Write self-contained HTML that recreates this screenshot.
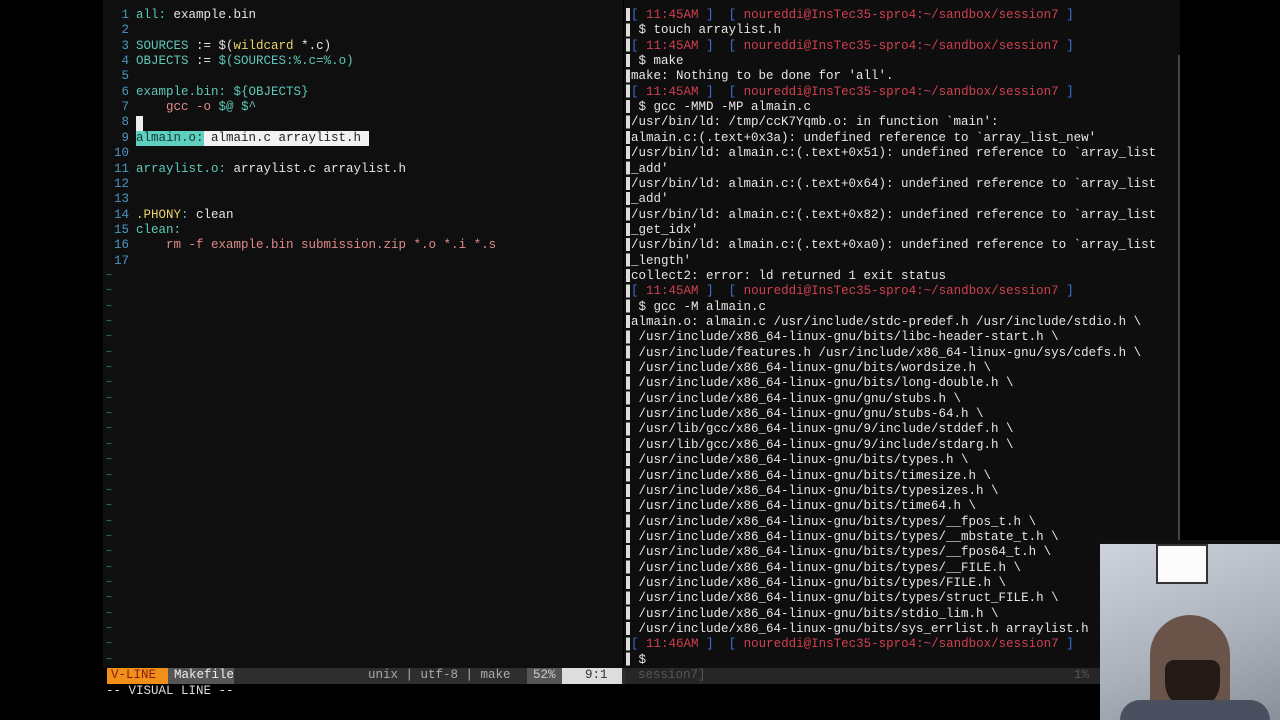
<!DOCTYPE html><html><head><style>
body{margin:0;width:1280px;height:720px;background:#000;overflow:hidden;position:relative;font-family:"Liberation Mono",monospace;font-size:12.5px;}
.l{position:absolute;white-space:pre;line-height:15.35px;height:15.35px;}
#vim{position:absolute;left:103px;top:0;width:520px;height:668px;background:#0f0f0f;}
#term{position:absolute;left:624px;top:0;width:556px;height:668px;background:#0e0e0e;}
.n{color:#4a96c0;}.t{color:#5ec8b8}.w{color:#e6e6e6}.y{color:#e8d36a}.p{color:#e08a8a}
.b{color:#3d6fd6}.r{color:#d04050}.g{color:#888}
</style></head><body>
<div id="vim"></div><div id="term"></div>
<div style="position:absolute;left:136px;top:116px;width:7px;height:15px;background:#eee"></div>
<div style="position:absolute;left:136px;top:131px;width:68px;height:15px;background:#5fd0c0"></div>
<div style="position:absolute;left:204px;top:131px;width:165px;height:15px;background:#f2f2f2"></div>
<div id="code"></div>
<div style="position:absolute;left:626px;top:8px;width:4px;height:660px;background:repeating-linear-gradient(#ddd 0 13px,#0e0e0e 13px 15.35px)"></div>
<div style="position:absolute;left:1178px;top:55px;width:2px;height:485px;background:#444"></div>
<div style="position:absolute;left:107px;top:668px;width:518px;height:16px;background:#2e2e2e"></div>
<div style="position:absolute;left:625px;top:668px;width:475px;height:16px;background:#262626"></div>
<div style="position:absolute;left:107px;top:668px;width:61px;height:16px;background:#f0901a"></div>
<div style="position:absolute;left:168px;top:668px;width:66px;height:16px;background:#555"></div>
<div style="position:absolute;left:527px;top:668px;width:35px;height:16px;background:#555"></div>
<div style="position:absolute;left:562px;top:668px;width:60px;height:16px;background:#ddd"></div>
<div class="l" style="left:111px;top:668px;color:#8a1a10">V-LINE</div>
<div class="l" style="left:174px;top:668px;color:#eee">Makefile</div>
<div class="l" style="left:368px;top:668px;color:#aaa">unix | utf-8 | make</div>
<div class="l" style="left:533px;top:668px;color:#ccc">52%</div>
<div class="l" style="left:585px;top:668px;color:#333">9:1</div>
<div class="l" style="left:638px;top:668px;color:#555">session7]</div>
<div class="l" style="left:1074px;top:668px;color:#555">1%</div>
<div class="l" style="left:106px;top:684px;color:#ddd">-- VISUAL LINE --</div>
<div style="position:absolute;left:1100px;top:540px;width:180px;height:180px;background:linear-gradient(160deg,#cfd4dc,#aab0ba 60%,#8a909a)">
<div style="position:absolute;left:0;top:0;width:180px;height:4px;background:#111"></div>
<div style="position:absolute;left:56px;top:4px;width:48px;height:36px;background:#fbfbfb;border:2px solid #333"></div>
<div style="position:absolute;left:50px;top:75px;width:80px;height:105px;border-radius:40px 40px 10px 10px;background:#6a5348"></div>
<div style="position:absolute;left:65px;top:120px;width:55px;height:50px;border-radius:10px 10px 30px 30px;background:#231a16"></div>
<div style="position:absolute;left:20px;top:160px;width:150px;height:20px;background:#4a5060;border-radius:20px 20px 0 0"></div>
</div>
<script>
const V=[
['<span class="t">all:</span> <span class="w">example.bin</span>'],[''],
['<span class="t">SOURCES</span> <span class="w">:= $(</span><span class="y">wildcard</span><span class="w"> *.c)</span>'],
['<span class="t">OBJECTS</span> <span class="w">:= </span><span class="t">$(SOURCES:%.c=%.o)</span>'],[''],
['<span class="t">example.bin:</span> <span class="t">${OBJECTS}</span>'],
['    <span class="p">gcc -o</span> <span class="t">$@</span> <span class="t">$^</span>'],[''],
['<span style="color:#0f3a35">almain.o:</span> <span style="color:#222">almain.c arraylist.h</span>'],[''],
['<span class="t">arraylist.o:</span> <span class="w">arraylist.c arraylist.h</span>'],[''],[''],
['<span class="y">.PHONY</span><span class="t">:</span> <span class="w">clean</span>'],['<span class="t">clean:</span>'],
['    <span class="p">rm -f example.bin submission.zip *.o *.i *.s</span>'],['']];
let h='';const LH=15.35,T=8;
V.forEach((v,i)=>{let y=T+i*LH;h+=`<div class="l n" style="left:107px;width:22px;text-align:right;top:${y}px">${i+1}</div><div class="l" style="left:136px;top:${y}px">${v[0]}</div>`;});
for(let i=17;i<43;i++)h+=`<div class="l" style="left:106px;top:${T+i*LH}px;color:#3a8a80;font-size:10px">~</div>`;
const P=(t)=>`<span class="b">[</span> <span class="r">${t}</span> <span class="b">]</span>  <span class="b">[</span> <span class="r">noureddi@InsTec35-spro4:~/sandbox/session7</span> <span class="b">]</span>`;
const W=s=>`<span class="w">${s}</span>`;
const Tm=[P('11:45AM'),W(' $ touch arraylist.h'),P('11:45AM'),W(' $ make'),W("make: Nothing to be done for 'all'."),P('11:45AM'),W(' $ gcc -MMD -MP almain.c'),
W("/usr/bin/ld: /tmp/ccK7Yqmb.o: in function `main':"),W("almain.c:(.text+0x3a): undefined reference to `array_list_new'"),
W("/usr/bin/ld: almain.c:(.text+0x51): undefined reference to `array_list"),W("_add'"),
W("/usr/bin/ld: almain.c:(.text+0x64): undefined reference to `array_list"),W("_add'"),
W("/usr/bin/ld: almain.c:(.text+0x82): undefined reference to `array_list"),W("_get_idx'"),
W("/usr/bin/ld: almain.c:(.text+0xa0): undefined reference to `array_list"),W("_length'"),
W("collect2: error: ld returned 1 exit status"),P('11:45AM'),W(' $ gcc -M almain.c'),
W("almain.o: almain.c /usr/include/stdc-predef.h /usr/include/stdio.h \\"),
W(" /usr/include/x86_64-linux-gnu/bits/libc-header-start.h \\"),
W(" /usr/include/features.h /usr/include/x86_64-linux-gnu/sys/cdefs.h \\"),
W(" /usr/include/x86_64-linux-gnu/bits/wordsize.h \\"),
W(" /usr/include/x86_64-linux-gnu/bits/long-double.h \\"),
W(" /usr/include/x86_64-linux-gnu/gnu/stubs.h \\"),
W(" /usr/include/x86_64-linux-gnu/gnu/stubs-64.h \\"),
W(" /usr/lib/gcc/x86_64-linux-gnu/9/include/stddef.h \\"),
W(" /usr/lib/gcc/x86_64-linux-gnu/9/include/stdarg.h \\"),
W(" /usr/include/x86_64-linux-gnu/bits/types.h \\"),
W(" /usr/include/x86_64-linux-gnu/bits/timesize.h \\"),
W(" /usr/include/x86_64-linux-gnu/bits/typesizes.h \\"),
W(" /usr/include/x86_64-linux-gnu/bits/time64.h \\"),
W(" /usr/include/x86_64-linux-gnu/bits/types/__fpos_t.h \\"),
W(" /usr/include/x86_64-linux-gnu/bits/types/__mbstate_t.h \\"),
W(" /usr/include/x86_64-linux-gnu/bits/types/__fpos64_t.h \\"),
W(" /usr/include/x86_64-linux-gnu/bits/types/__FILE.h \\"),
W(" /usr/include/x86_64-linux-gnu/bits/types/FILE.h \\"),
W(" /usr/include/x86_64-linux-gnu/bits/types/struct_FILE.h \\"),
W(" /usr/include/x86_64-linux-gnu/bits/stdio_lim.h \\"),
W(" /usr/include/x86_64-linux-gnu/bits/sys_errlist.h arraylist.h"),
P('11:46AM'),W(' $')];
Tm.forEach((v,i)=>{h+=`<div class="l" style="left:631px;top:${T+i*LH}px">${v}</div>`;});
document.getElementById('code').innerHTML=h;
</script>
</body></html>
